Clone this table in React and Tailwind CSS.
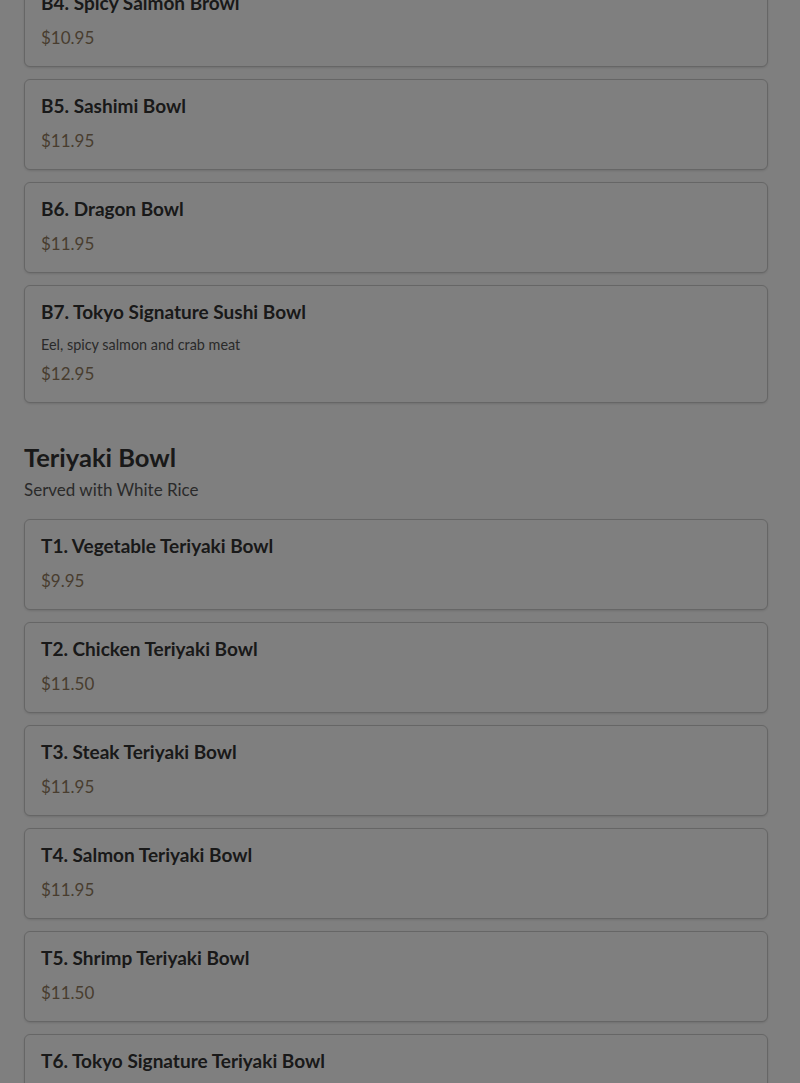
const bowls = [
  { name: 'B4. Spicy Salmon Browl', price: '$10.95' },
  { name: 'B5. Sashimi Bowl', price: '$11.95' },
  { name: 'B6. Dragon Bowl', price: '$11.95' },
  { name: 'B7. Tokyo Signature Sushi Bowl', desc: 'Eel, spicy salmon and crab meat', price: '$12.95' },
];

const teriyaki = [
  { name: 'T1. Vegetable Teriyaki Bowl', price: '$9.95' },
  { name: 'T2. Chicken Teriyaki Bowl', price: '$11.50' },
  { name: 'T3. Steak Teriyaki Bowl', price: '$11.95' },
  { name: 'T4. Salmon Teriyaki Bowl', price: '$11.95' },
  { name: 'T5. Shrimp Teriyaki Bowl', price: '$11.50' },
  { name: 'T6. Tokyo Signature Teriyaki Bowl', price: '$13.95' },
];

const MenuItem = ({ item }) => (
  <div className="bg-white border border-[#cccccc] rounded-md shadow-sm px-4 py-4">
    <h3 className="text-[19px] leading-[20px] font-bold text-[#333]">{item.name}</h3>
    {item.desc && (
      <p className="text-[14.4px] leading-[20px] text-[#555] mt-[13px]">{item.desc}</p>
    )}
    <p className={`text-[17px] leading-[24px] text-[#917a5e] ${item.desc ? 'mt-[7px]' : 'mt-[13px]'}`}>
      {item.price}
    </p>
  </div>
);

export default function App() {
  return (
    <div className="relative min-h-screen bg-white overflow-hidden h-[1083px]" style={{ fontFamily: 'Lato, "Noto Sans", sans-serif' }}>
      <div className="pl-6 pr-8 mt-[-24px]">
        <div className="flex flex-col gap-3">
          {bowls.map((item) => (
            <MenuItem key={item.name} item={item} />
          ))}
        </div>

        {/* Teriyaki section */}
        <div className="mt-[38px]">
          <h2 className="text-[25.5px] leading-[32px] font-bold text-[#333]">Teriyaki Bowl</h2>
          <p className="text-[17px] leading-[24px] text-[#555] mt-[5px]">Served with White Rice</p>
        </div>
        <div className="flex flex-col gap-3 mt-[17px]">
          {teriyaki.map((item) => (
            <MenuItem key={item.name} item={item} />
          ))}
        </div>
      </div>

      {/* modal backdrop */}
      <div className="fixed inset-0 bg-black/50" />
    </div>
  );
}
